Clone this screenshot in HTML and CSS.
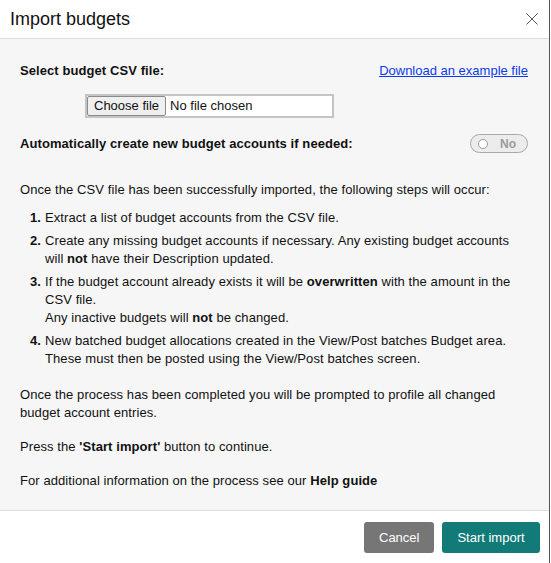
FILE: index.html
```html
<!DOCTYPE html>
<html>
<head>
<meta charset="utf-8">
<link rel="stylesheet" href="styles.css">
</head>
<body>
<div class="dialog">
  <div class="header">
    <div class="title">Import budgets</div>
    <svg class="close" width="12" height="12" viewBox="0 0 12 12"><path d="M0.5 0.5 L11.5 11.5 M11.5 0.5 L0.5 11.5" stroke="#555" stroke-width="1" fill="none"/></svg>
  </div>
  <div class="body">
    <div class="row-select">
      <span class="label">Select budget CSV file:</span>
      <a class="link" href="#">Download an example file</a>
    </div>
    <div class="file-row">
      <div class="file-box">
        <button class="file-btn">Choose file</button>
        <span class="file-name">No file chosen</span>
      </div>
    </div>
    <div class="row-toggle">
      <span class="label">Automatically create new budget accounts if needed:</span>
      <div class="toggle"><span class="knob"></span><span class="toggle-text">No</span></div>
    </div>
    <p class="intro">Once the CSV file has been successfully imported, the following steps will occur:</p>
    <ol class="steps">
      <li><span class="num">1.</span><span class="txt">Extract a list of budget accounts from the CSV file.</span></li>
      <li><span class="num">2.</span><span class="txt">Create any missing budget accounts if necessary. Any existing budget accounts will <b>not</b> have their Description updated.</span></li>
      <li><span class="num">3.</span><span class="txt">If the budget account already exists it will be <b>overwritten</b> with the amount in the CSV file.<br>Any inactive budgets will <b>not</b> be changed.</span></li>
      <li><span class="num">4.</span><span class="txt">New batched budget allocations created in the View/Post batches Budget area. These must then be posted using the View/Post batches screen.</span></li>
    </ol>
    <p class="para first">Once the process has been completed you will be prompted to profile all changed budget account entries.</p>
    <p class="para">Press the <b>'Start import'</b> button to continue.</p>
    <p class="para">For additional information on the process see our <b>Help guide</b></p>
  </div>
  <div class="footer">
    <button class="btn cancel">Cancel</button>
    <button class="btn primary">Start import</button>
  </div>
</div>
</body>
</html>
```
FILE: styles.css
```css
html, body {
  margin: 0;
  padding: 0;
  background: #ffffff;
}
body {
  font-family: "Liberation Sans", Arial, sans-serif;
  font-size: 13px;
  color: #111;
}
.dialog {
  width: 549px;
  height: 563px;
  border-right: 1px solid #555;
  display: flex;
  flex-direction: column;
  background: #fff;
}
.header {
  height: 38px;
  border-bottom: 1px solid #dcdcdc;
  display: flex;
  align-items: center;
  justify-content: space-between;
  padding: 0 11px 0 10px;
  flex-shrink: 0;
}
.title {
  font-size: 18px;
  color: #111;
  line-height: 20px;
}
.close {
  display: block;
}
.body {
  background: #f6f6f6;
  height: 472px;
  border-bottom: 1px solid #dcdcdc;
  padding: 0 21px 0 20px;
  box-sizing: border-box;
  flex-shrink: 0;
  letter-spacing: 0.08px;
  line-height: 18px;
}
.row-select {
  display: flex;
  justify-content: space-between;
  align-items: center;
  margin-top: 23px;
}
.label {
  font-weight: bold;
}
.link {
  color: #0b3bef;
  text-decoration: underline;
  letter-spacing: 0;
}
.file-row {
  margin-top: 14px;
  padding-left: 65px;
}
.file-box {
  display: flex;
  align-items: center;
  width: 245px;
  height: 20px;
  border: 2px solid #c4c4c4;
  background: #fff;
  letter-spacing: 0;
}
.file-btn {
  font-family: "Liberation Sans", Arial, sans-serif;
  font-size: 13px;
  color: #111;
  height: 20px;
  padding: 0 6px;
  margin: 0;
  border: 1px solid #8a8a8a;
  border-radius: 2px;
  background: #efefef;
  line-height: 18px;
}
.file-name {
  margin-left: 4px;
}
.row-toggle {
  display: flex;
  justify-content: space-between;
  align-items: center;
  margin-top: 16px;
}
.toggle {
  height: 17px;
  width: 49px;
  border: 1px solid #a8a8a8;
  border-radius: 10px;
  background: #ececec;
  display: flex;
  align-items: center;
  padding-left: 7px;
}
.knob {
  width: 8px;
  height: 8px;
  border: 1px solid #9a9a9a;
  border-radius: 50%;
  background: #fff;
}
.toggle-text {
  margin-left: 12px;
  font-weight: bold;
  font-size: 12px;
  color: #9a9a9a;
}
.intro {
  margin: 28px 0 0 0;
}
.steps {
  list-style: none;
  margin: 10px 0 0 0;
  padding: 0 0 0 10px;
}
.steps li {
  display: flex;
  margin-bottom: 5px;
}
.steps li:last-child {
  margin-bottom: 0;
}
.num {
  font-weight: bold;
  width: 15px;
  flex-shrink: 0;
}
.txt {
  flex: 1;
  padding-right: 3px;
}
.para {
  margin: 16px 0 0 0;
}
.para.first {
  margin-top: 18px;
}
.footer {
  display: flex;
  justify-content: flex-end;
  gap: 8px;
  padding: 11px 9px 0 0;
}
.btn {
  font-family: "Liberation Sans", Arial, sans-serif;
  font-size: 13px;
  color: #fff;
  height: 31px;
  padding: 0 15px;
  border: none;
  border-radius: 3px;
}
.cancel {
  background: #767676;
  width: 70px;
}
.primary {
  background: #127b78;
  width: 98px;
}
```
